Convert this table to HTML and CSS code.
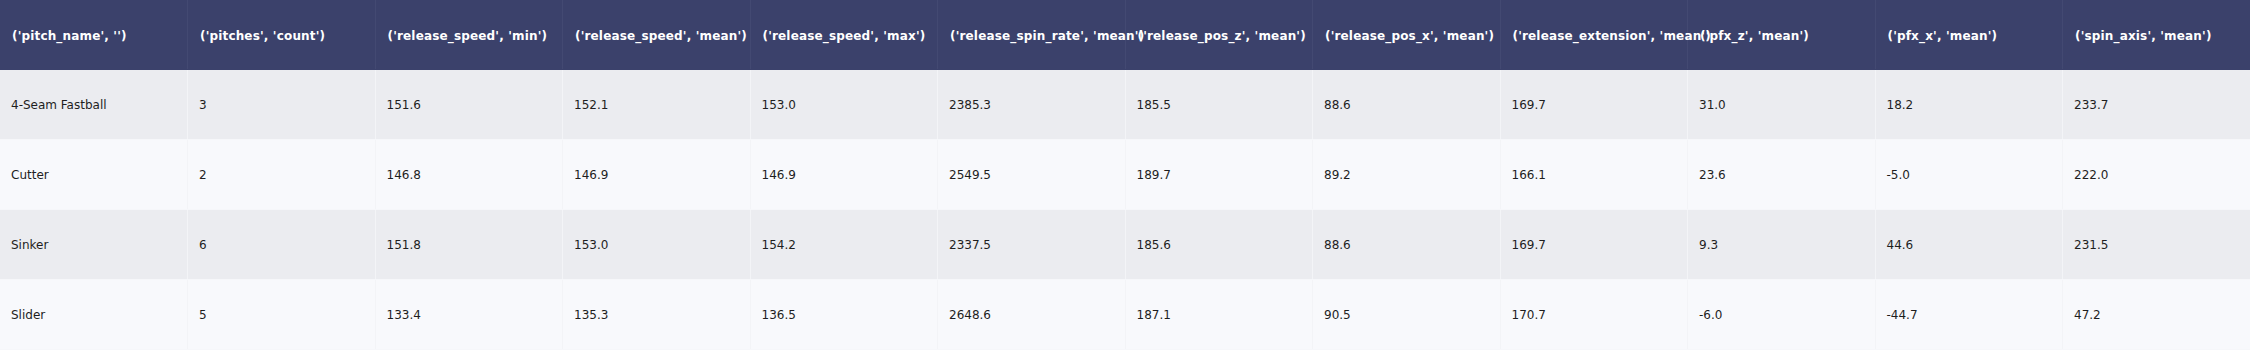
FILE: index.html
```html
<!DOCTYPE html>
<html lang="en">
<head>
<meta charset="utf-8">
<title>Pitch summary</title>
<link rel="stylesheet" href="styles.css">
</head>
<body>
<table class="stats">
  <thead>
    <tr>
      <th>('pitch_name', '')</th>
      <th>('pitches', 'count')</th>
      <th>('release_speed', 'min')</th>
      <th>('release_speed', 'mean')</th>
      <th>('release_speed', 'max')</th>
      <th>('release_spin_rate', 'mean')</th>
      <th>('release_pos_z', 'mean')</th>
      <th>('release_pos_x', 'mean')</th>
      <th>('release_extension', 'mean')</th>
      <th>('pfx_z', 'mean')</th>
      <th>('pfx_x', 'mean')</th>
      <th>('spin_axis', 'mean')</th>
    </tr>
  </thead>
  <tbody>
    <tr>
      <td>4-Seam Fastball</td><td>3</td><td>151.6</td><td>152.1</td><td>153.0</td><td>2385.3</td><td>185.5</td><td>88.6</td><td>169.7</td><td>31.0</td><td>18.2</td><td>233.7</td>
    </tr>
    <tr>
      <td>Cutter</td><td>2</td><td>146.8</td><td>146.9</td><td>146.9</td><td>2549.5</td><td>189.7</td><td>89.2</td><td>166.1</td><td>23.6</td><td>-5.0</td><td>222.0</td>
    </tr>
    <tr>
      <td>Sinker</td><td>6</td><td>151.8</td><td>153.0</td><td>154.2</td><td>2337.5</td><td>185.6</td><td>88.6</td><td>169.7</td><td>9.3</td><td>44.6</td><td>231.5</td>
    </tr>
    <tr>
      <td>Slider</td><td>5</td><td>133.4</td><td>135.3</td><td>136.5</td><td>2648.6</td><td>187.1</td><td>90.5</td><td>170.7</td><td>-6.0</td><td>-44.7</td><td>47.2</td>
    </tr>
  </tbody>
</table>
</body>
</html>
```
FILE: styles.css
```css
html, body {
  margin: 0;
  padding: 0;
  background: #f8f9fc;
}

.stats {
  width: 2250px;
  table-layout: fixed;
  border-collapse: collapse;
  font-family: "DejaVu Sans", Verdana, sans-serif;
  font-size: 12px;
}

.stats th,
.stats td {
  height: 69px;
  padding: 0 11px;
  text-align: left;
  vertical-align: middle;
  white-space: nowrap;
}

.stats th {
  padding: 3px 11px 0 12px;
  height: 66px;
  background: #3b416b;
  color: #ffffff;
  font-weight: bold;
  letter-spacing: 0.16px;
  border-right: 1px solid #434972;
  border-bottom: 1px solid #3b416b;
}

.stats td {
  color: #1e1e1e;
  border-right: 1px solid #f3f4f7;
  border-bottom: 1px solid #f6f7fa;
}

.stats tbody tr:nth-child(odd) td {
  background: #ebecf0;
}

.stats tbody tr:nth-child(even) td {
  background: #f8f9fc;
}

.stats th:last-child,
.stats td:last-child {
  border-right: none;
}
```
